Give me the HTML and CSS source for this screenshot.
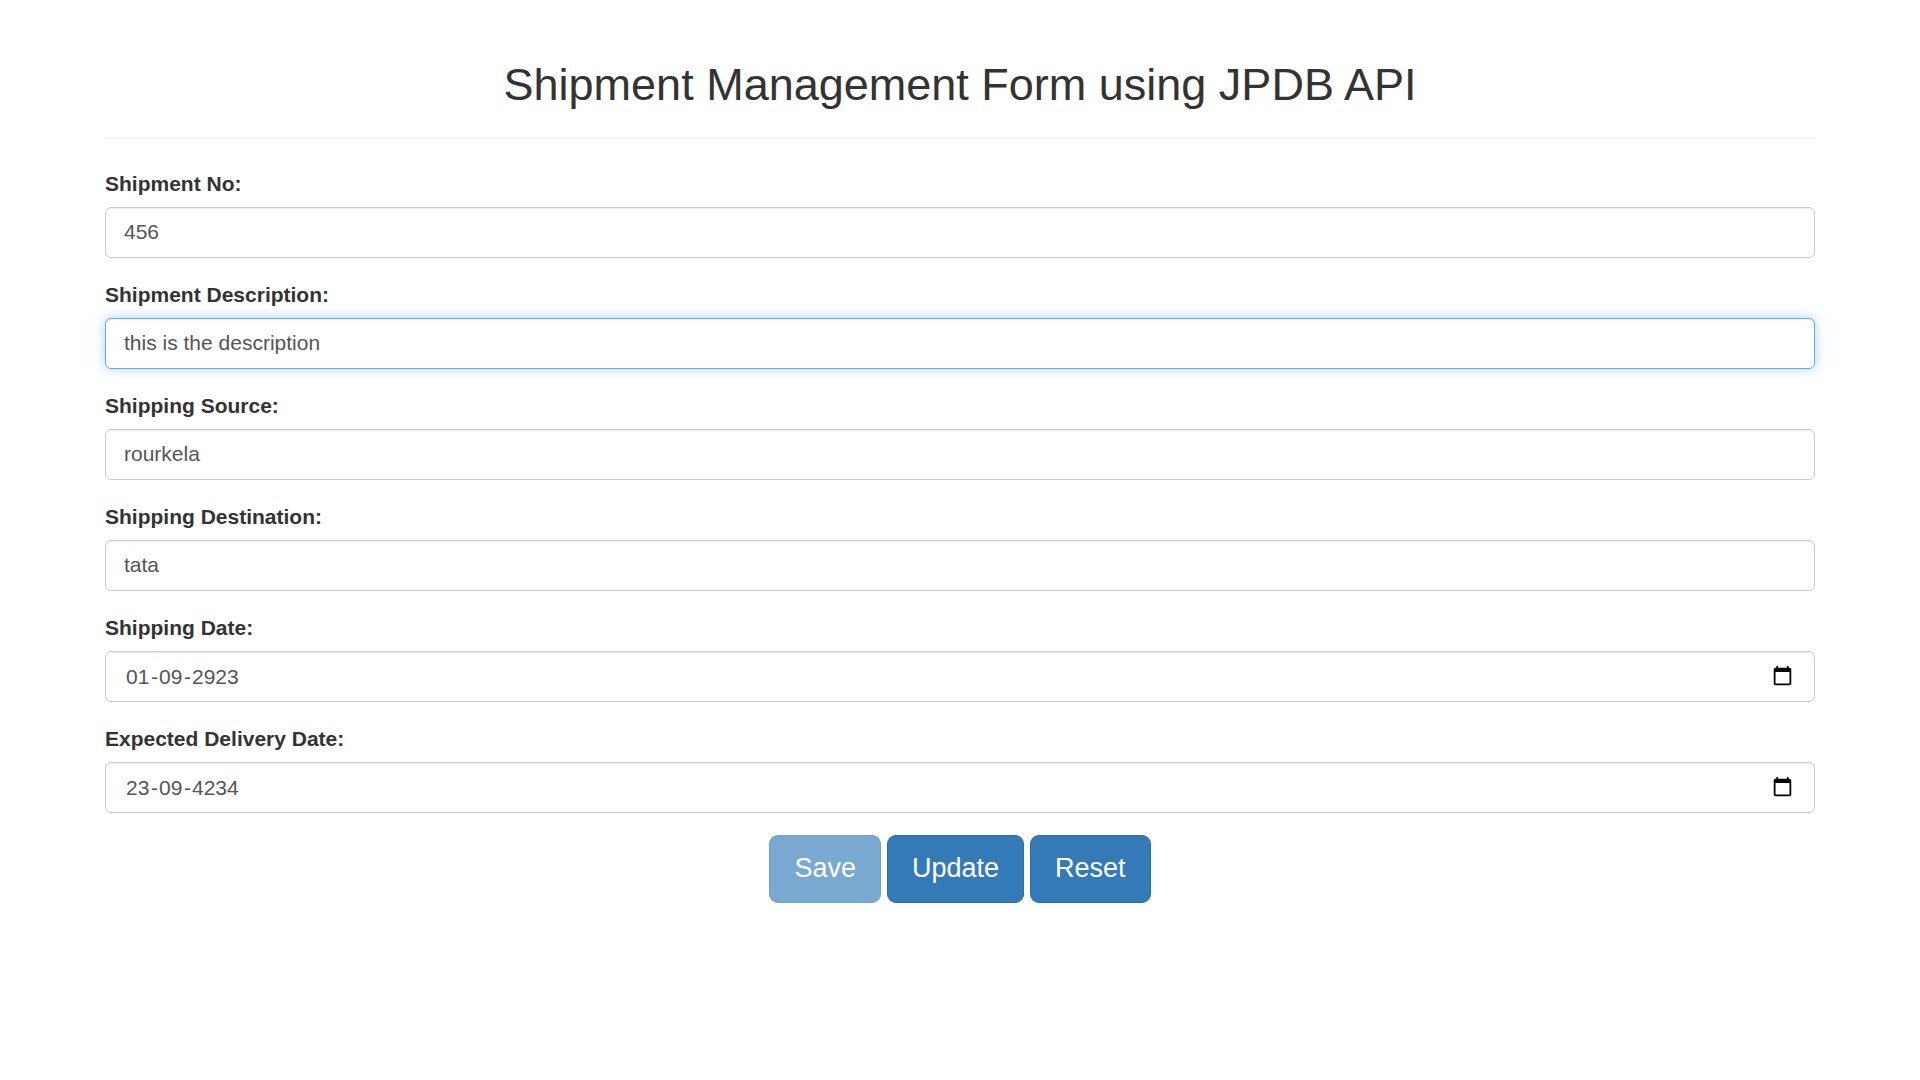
FILE: index.html
```html
<!DOCTYPE html>
<html lang="en">
<head>
<meta charset="utf-8">
<meta name="viewport" content="width=device-width, initial-scale=1">
<title>Shipment Management Form</title>
<link rel="stylesheet" href="styles.css">
</head>
<body>
<main class="container">
  <h2 class="title">Shipment Management Form using JPDB API</h2>
  <hr class="divider">
  <form>
    <div class="form-group">
      <label for="shipNo">Shipment No:</label>
      <input class="form-control" type="text" id="shipNo" value="456">
    </div>
    <div class="form-group">
      <label for="shipDesc">Shipment Description:</label>
      <input class="form-control active" type="text" id="shipDesc" value="this is the description">
    </div>
    <div class="form-group">
      <label for="shipSource">Shipping Source:</label>
      <input class="form-control" type="text" id="shipSource" value="rourkela">
    </div>
    <div class="form-group">
      <label for="shipDest">Shipping Destination:</label>
      <input class="form-control" type="text" id="shipDest" value="tata">
    </div>
    <div class="form-group">
      <label for="shipDay" id="shipDateLabel">Shipping Date:</label>
      <div class="form-control date-control" role="group" aria-labelledby="shipDateLabel">
        <input class="date-part" type="text" inputmode="numeric" maxlength="2" id="shipDay" value="01">
        <span>-</span>
        <input class="date-part" type="text" inputmode="numeric" maxlength="2" aria-label="Month" value="09">
        <span>-</span>
        <input class="date-part year" type="text" inputmode="numeric" maxlength="4" aria-label="Year" value="2923">
        <button class="picker" type="button" aria-label="Choose shipping date">
          <svg class="icon" viewBox="0 0 24 24" aria-hidden="true"><path d="M20 3h-1V1h-2v2H7V1H5v2H4c-1.1 0-2 .9-2 2v16c0 1.1.9 2 2 2h16c1.1 0 2-.9 2-2V5c0-1.100-.9-2-2-2zm0 18H4V8h16v13z"/></svg>
        </button>
      </div>
    </div>
    <div class="form-group">
      <label for="deliveryDay" id="deliveryDateLabel">Expected Delivery Date:</label>
      <div class="form-control date-control" role="group" aria-labelledby="deliveryDateLabel">
        <input class="date-part" type="text" inputmode="numeric" maxlength="2" id="deliveryDay" value="23">
        <span>-</span>
        <input class="date-part" type="text" inputmode="numeric" maxlength="2" aria-label="Month" value="09">
        <span>-</span>
        <input class="date-part year" type="text" inputmode="numeric" maxlength="4" aria-label="Year" value="4234">
        <button class="picker" type="button" aria-label="Choose delivery date">
          <svg class="icon" viewBox="0 0 24 24" aria-hidden="true"><path d="M20 3h-1V1h-2v2H7V1H5v2H4c-1.1 0-2 .9-2 2v16c0 1.1.9 2 2 2h16c1.1 0 2-.9 2-2V5c0-1.100-.9-2-2-2zm0 18H4V8h16v13z"/></svg>
        </button>
      </div>
    </div>
    <div class="actions">
      <button class="btn" type="button" disabled>Save</button>
      <button class="btn" type="button">Update</button>
      <button class="btn" type="reset">Reset</button>
    </div>
  </form>
</main>
</body>
</html>
```
FILE: styles.css
```css
* {
  box-sizing: border-box;
}

body {
  margin: 0;
  background: #fff;
  color: #333;
  font: 21px/30px "Liberation Sans", Arial, sans-serif;
}

.container {
  max-width: 1756px;
  margin: 0 auto;
  padding: 60px 23px 30px;
}

.title {
  margin: 0;
  font-size: 45px;
  font-weight: 500;
  line-height: 49px;
  text-align: center;
}

.divider {
  margin: 29px 0 30px;
  border: 0;
  border-top: 1px solid #eee;
}

.form-group {
  margin-bottom: 22px;
}

label {
  display: block;
  margin-bottom: 8px;
  font-weight: 700;
}

.form-control {
  display: block;
  width: 100%;
  height: 51px;
  padding: 8px 18px 10px;
  border: 1px solid #ccc;
  border-radius: 6px;
  background: #fff;
  box-shadow: inset 0 1px 2px rgba(0, 0, 0, .075);
  color: #555;
  font: inherit;
}

.form-control:focus,
.form-control:focus-within,
.form-control.active {
  border-color: #72aace;
  outline: 0;
  box-shadow: inset 0 1px 2px rgba(0, 0, 0, .075), 0 0 12px rgba(102, 180, 233, .6);
}

.date-control {
  display: flex;
  align-items: center;
  padding: 0 21px 0 19px;
}

.date-part {
  width: 26px;
  padding: 0 1px;
  border: 0;
  outline: 0;
  background: transparent;
  color: inherit;
  font: inherit;
}

.date-part.year {
  width: 50px;
}

.picker {
  display: flex;
  margin-left: auto;
  padding: 0 0 2px;
  border: 0;
  background: transparent;
  color: #000;
  cursor: pointer;
}

.icon {
  width: 21px;
  height: 21px;
  fill: currentColor;
}

.actions {
  display: flex;
  flex-wrap: wrap;
  justify-content: center;
  gap: 6px;
}

.btn {
  padding: 14px 24px 16px;
  border: 1px solid #2e6da4;
  border-radius: 9px;
  background: #337ab7;
  color: #fff;
  font: inherit;
  font-size: 27px;
  line-height: 36px;
  cursor: pointer;
}

.btn:disabled {
  opacity: .65;
  cursor: not-allowed;
}
```
